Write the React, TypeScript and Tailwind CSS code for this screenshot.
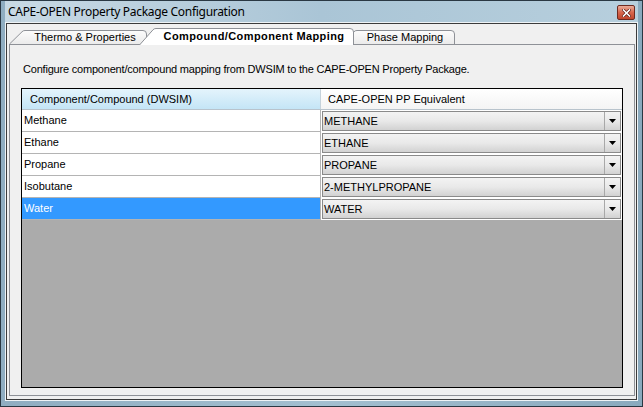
import React from "react";

const BODY = "font-['Liberation_Sans',Arial,sans-serif]";

function TabShape({ w, h, slant, selected }: { w: number; h: number; slant: number; selected: boolean }) {
  const id = selected ? "tabsel" : "tabn" + w;
  const d = `M0.5,${h} L${slant - 1},1.8 Q${slant},0.5 ${slant + 2},0.5 L${w - 4},0.5 Q${w - 0.5},0.5 ${w - 0.5},4 L${w - 0.5},${h}`;
  return (
    <svg className="absolute inset-0" width={w} height={h} viewBox={`0 0 ${w} ${h}`}>
      <defs>
        <linearGradient id={id} x1="0" y1="0" x2="0" y2="1">
          <stop offset="0" stopColor={selected ? "#ffffff" : "#fcfcfc"} />
          <stop offset="1" stopColor={selected ? "#ffffff" : "#ebebeb"} />
        </linearGradient>
      </defs>
      <path d={d + " Z"} fill={`url(#${id})`} stroke="none" />
      <path d={d} fill="none" stroke="#8e9197" strokeWidth="1" />
    </svg>
  );
}

function Tab({
  w,
  h,
  slant,
  selected,
  label,
  className,
}: {
  w: number;
  h: number;
  slant: number;
  selected: boolean;
  label: string;
  className: string;
}) {
  return (
    <div className={`relative shrink-0 ${className}`} style={{ width: w, height: h }}>
      <TabShape w={w} h={h} slant={slant} selected={selected} />
      <div
        className={`relative flex h-full items-center justify-center text-[11px] text-black ${BODY} ${
          selected ? "font-bold tracking-[0.4px]" : ""
        }`}
        style={{ paddingLeft: slant }}
      >
        {label}
      </div>
    </div>
  );
}

function Combo({ value }: { value: string }) {
  return (
    <div className="mx-[1px] mt-[1px] flex h-[20px] items-center border border-[#8a8a8a] bg-gradient-to-b from-[#f3f3f3] via-[#e9e9e9] to-[#d2d2d2]">
      <span className={`flex-1 pl-[1px] text-[11px] text-black ${BODY}`}>{value}</span>
      <div className="flex h-full w-[16px] items-center justify-center border-l border-[#a8a8a8]">
        <svg width="7" height="4" viewBox="0 0 7 4">
          <path d="M0,0 H7 L3.5,4 Z" fill="#000" />
        </svg>
      </div>
    </div>
  );
}

const rows = [
  { name: "Methane", pp: "METHANE" },
  { name: "Ethane", pp: "ETHANE" },
  { name: "Propane", pp: "PROPANE" },
  { name: "Isobutane", pp: "2-METHYLPROPANE" },
  { name: "Water", pp: "WATER", sel: true },
];

export default function App() {
  return (
    <div className="h-[407px] w-[643px] overflow-hidden bg-white">
      <div className="flex h-[407px] w-[643px] flex-col border border-[#2a3843] bg-gradient-to-r from-[#8fadc1] via-[#a3bfd0] to-[#8aaabe] px-[4px] pb-[5px]">
        {/* title bar */}
        <div className="flex h-[21px] shrink-0 items-center bg-gradient-to-r from-[#c8d9e4] via-[#aac5d6] to-[#b7cfdd]">
          <span className="pl-[3px] font-['Noto_Sans',sans-serif] text-[12px] tracking-[-0.3px] text-black">
            CAPE-OPEN Property Package Configuration
          </span>
          <div className="flex-1" />
          <div className="mr-[3px] mt-[2px] flex h-[15px] w-[18px] items-center justify-center rounded-[2px] border border-[#6e2a20] bg-gradient-to-b from-[#e9ab98] via-[#d6654c] to-[#c0452c]">
            <svg width="9" height="8" viewBox="0 0 9 8">
              <path d="M1.5,1 L7.5,7 M7.5,1 L1.5,7" stroke="#5a1a12" strokeWidth="3" strokeLinecap="square" />
              <path d="M1.5,1 L7.5,7 M7.5,1 L1.5,7" stroke="#ffffff" strokeWidth="1.6" strokeLinecap="square" />
            </svg>
          </div>
        </div>
        {/* client */}
        <div className="flex-1 border border-[#eef3f6]">
          <div className="h-full border border-[#3b3b3b] bg-[#f0f0f0]">
            <div className="flex h-full flex-col pl-[2px] pr-[1px] pb-[3px] pt-[4px]">
              {/* tab strip */}
              <div className="flex h-[16px] shrink-0 items-end">
                <Tab w={138} h={14} slant={14} selected={false} label="Thermo & Properties" className="z-0" />
                <Tab
                  w={215}
                  h={17}
                  slant={15}
                  selected={true}
                  label="Compound/Component Mapping"
                  className="z-20 -ml-[8px] -mb-[1px]"
                />
                <Tab w={114} h={14} slant={14} selected={false} label="Phase Mapping" className="z-10 -ml-[13px]" />
              </div>
              {/* panel */}
              <div className="flex flex-1 flex-col border border-[#8e9197] bg-[#f0f0f0] px-[11px] pb-[7px] pt-[18px]">
                <div className={`h-[13px] pl-[2px] text-[11px] leading-[13px] tracking-[-0.2px] text-black ${BODY}`}>
                  Configure component/compound mapping from DWSIM to the CAPE-OPEN Property Package.
                </div>
                <div className="mt-[12px] flex flex-1 flex-col border border-black bg-[#ababab]">
                  {/* header */}
                  <div className="flex h-[21px] shrink-0 border-b border-[#b8c3cc]">
                    <div
                      className={`flex w-[299px] items-center border-r border-[#c5d2db] bg-gradient-to-b from-[#e4f4fc] to-[#c4e5f6] pl-[8px] text-[11px] text-black ${BODY}`}
                    >
                      Component/Compound (DWSIM)
                    </div>
                    <div
                      className={`flex flex-1 items-center bg-gradient-to-b from-[#ffffff] to-[#f4f4f4] pl-[7px] text-[11px] text-black ${BODY}`}
                    >
                      CAPE-OPEN PP Equivalent
                    </div>
                  </div>
                  {rows.map((r) => (
                    <div key={r.name} className="flex h-[22px] shrink-0">
                      <div
                        className={`flex w-[299px] items-center border-b border-r border-[#b4b4b4] pl-[2px] text-[11px] ${BODY} ${
                          r.sel ? "bg-[#3399ff] text-white" : "bg-white text-black"
                        }`}
                      >
                        {r.name}
                      </div>
                      <div className="flex-1 bg-white">
                        <Combo value={r.pp} />
                      </div>
                    </div>
                  ))}
                  <div className="flex-1" />
                </div>
              </div>
            </div>
          </div>
        </div>
      </div>
    </div>
  );
}
